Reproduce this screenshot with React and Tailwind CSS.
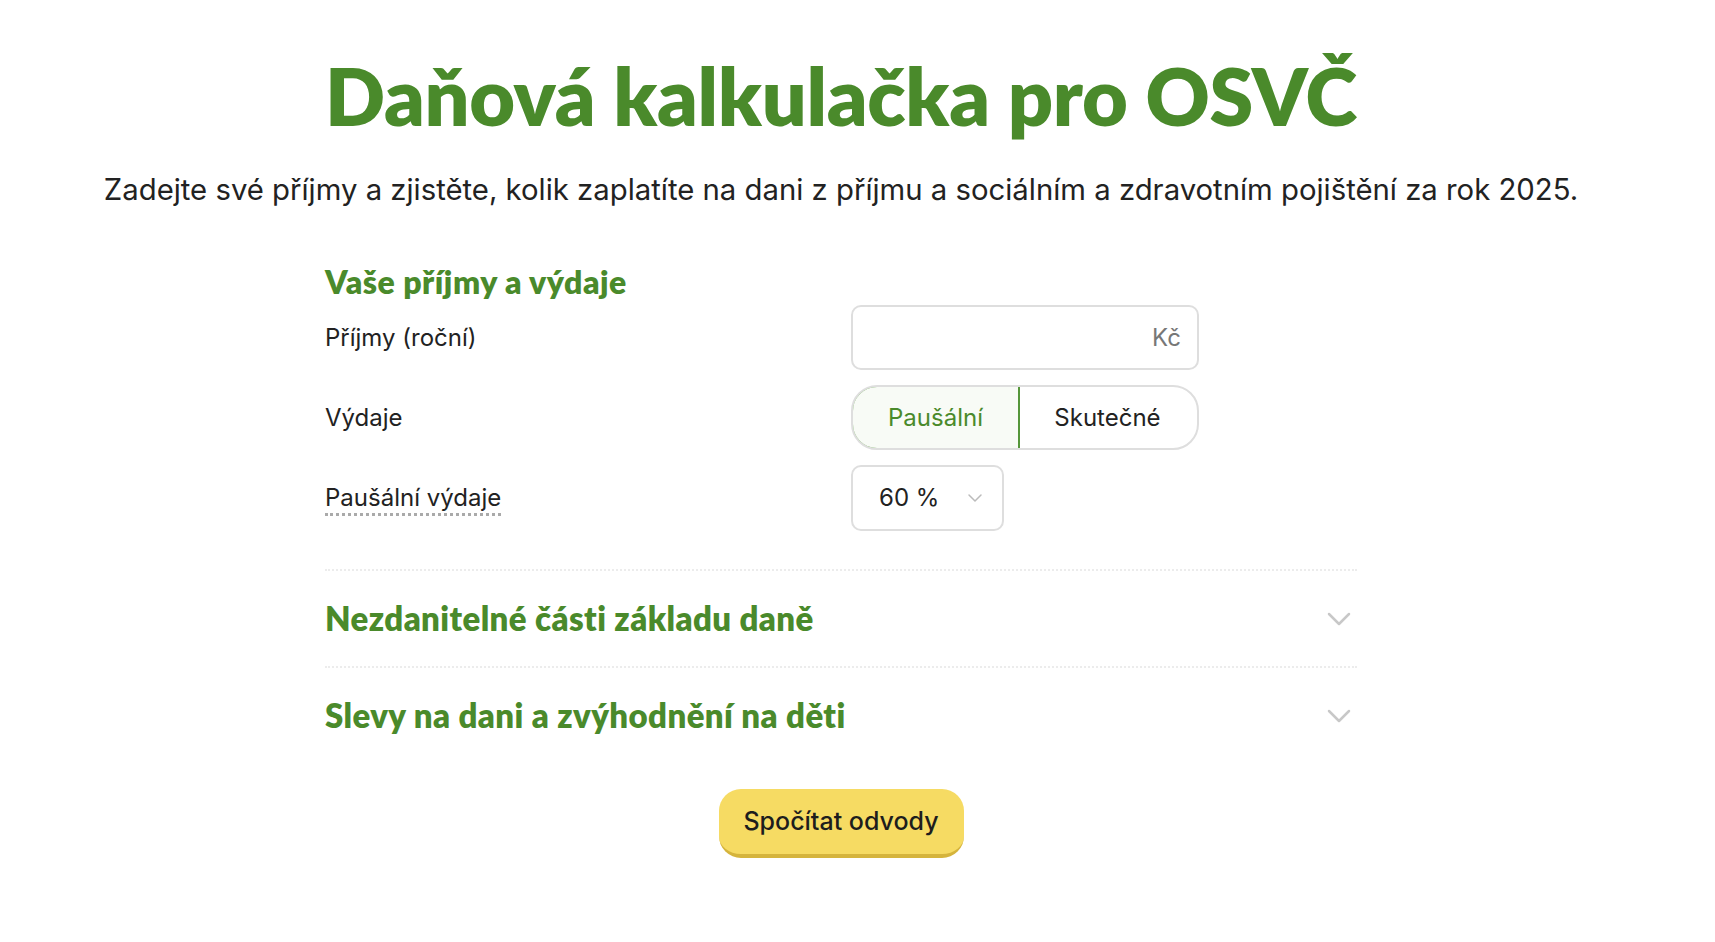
import React, { useState } from "react";

const heading = "font-['Lato','Noto_Sans',sans-serif]";

function Chevron({ className }) {
  return (
    <svg className={className} viewBox="0 0 24 24" fill="none" stroke="currentColor" strokeWidth="2" strokeLinecap="round" strokeLinejoin="round">
      <path d="M4 8l8 8 8-8" />
    </svg>
  );
}

function Section({ title }) {
  return (
    <div className="flex items-center justify-between border-t-2 border-dotted border-[#ececec] h-[97px] pr-[3px]">
      <h3 className={`${heading} text-[33px] font-extrabold text-[#4a8a2b] tracking-[0.4px]`}>{title}</h3>
      <Chevron className="w-[30px] h-[30px] text-[#c8c8c8]" />
    </div>
  );
}

export default function App() {
  const [mode, setMode] = useState("pausal");
  return (
    <div className="w-[1682px] bg-white font-['Inter','Liberation_Sans',sans-serif] text-[#222]">
      <div className="flex flex-col items-center pt-[46px]">
        <h1 className={`${heading} text-[79px] leading-[100px] font-extrabold text-[#4a8a2b] tracking-[-0.3px]`}>
          Daňová kalkulačka pro OSVČ
        </h1>
        <p className="mt-[24px] text-[29.3px] leading-[40px] text-[#222]">
          Zadejte své příjmy a zjistěte, kolik zaplatíte na dani z příjmu a sociálním a zdravotním pojištění za rok 2025.
        </p>
      </div>

      <div className="w-[1032px] mx-auto mt-[52px]">
        <h2 className={`${heading} text-[32px] leading-[40px] font-extrabold text-[#4a8a2b] tracking-[0.5px]`}>Vaše příjmy a výdaje</h2>

        <div className="mt-[3px] flex flex-col gap-[15px]">
          <div className="flex items-center">
            <div className="w-[526px] text-[24px]">Příjmy (roční)</div>
            <div className="w-[348px] h-[65px] border-2 border-[#dedede] rounded-[10px] flex items-center justify-end px-[16px] text-[24px] text-[#777]">
              Kč
            </div>
          </div>

          <div className="flex items-center">
            <div className="w-[526px] text-[24px]">Výdaje</div>
            <div className="w-[348px] h-[65px] flex rounded-[26px] border-2 border-[#dedede] overflow-hidden">
              <button
                onClick={() => setMode("pausal")}
                className={`w-[167px] text-[24px] ${mode === "pausal" ? "bg-[#f8fbf6] text-[#4a8a2b] border-2 border-[#55963a] -m-[2px] rounded-l-[26px] w-[169px]" : ""}`}
              >
                Paušální
              </button>
              <button onClick={() => setMode("real")} className="flex-1 text-[24px]">
                Skutečné
              </button>
            </div>
          </div>

          <div className="flex items-center">
            <div className="w-[526px] text-[24px]">
              <span className="border-b-[3px] border-dotted border-[#aaa] pb-[1px]">Paušální výdaje</span>
            </div>
            <div className="w-[153px] h-[66px] border-2 border-[#dedede] rounded-[10px] flex items-center justify-between pl-[26px] pr-[18px] text-[24px]">
              60 %
              <Chevron className="w-[18px] h-[18px] text-[#bbb]" />
            </div>
          </div>
        </div>

        <div className="mt-[38px]">
          <Section title="Nezdanitelné části základu daně" />
          <Section title="Slevy na dani a zvýhodnění na děti" />
        </div>

        <div className="flex justify-center mt-[26px]">
          <button className="w-[245px] h-[69px] rounded-[22px] bg-[#f6db63] border-b-[4px] border-[#d5b43c] text-[25px] font-medium text-[#1d1d1d]">
            Spočítat odvody
          </button>
        </div>
      </div>
    </div>
  );
}
